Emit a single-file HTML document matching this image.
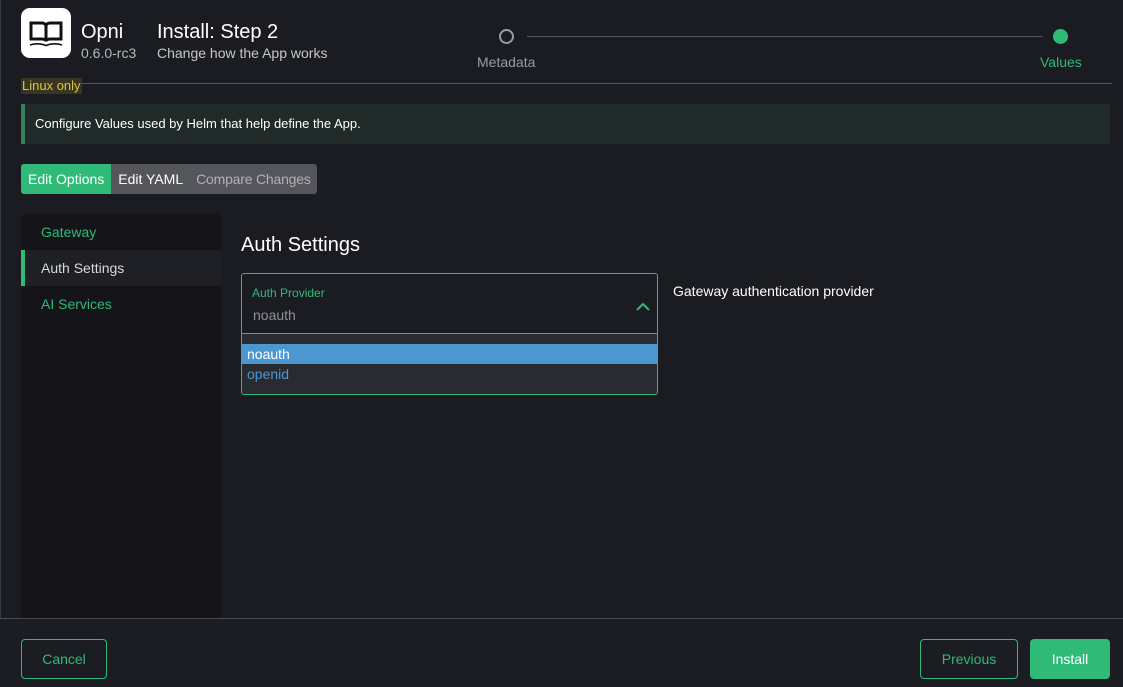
<!DOCTYPE html>
<html><head><style>
*{margin:0;padding:0;box-sizing:border-box}
body{width:1123px;height:687px;background:#1b1c21;font-family:"Liberation Sans",sans-serif;color:#fff;position:relative;overflow:hidden}
.abs{position:absolute}
</style></head><body>
<div class="abs" style="left:0;top:0;width:1px;height:687px;background:#3a3b40"></div>
<div class="abs" style="left:21px;top:8px;width:50px;height:50px;background:#fff;border-radius:9px">
<svg width="50" height="50" viewBox="0 0 50 50"><path d="M10 15h11c2.5 0 4 1.5 4 3.5v15c0-1.5-1.5-2.5-4-2.5H10z M40 15H29c-2.5 0-4 1.5-4 3.5v15c0-1.5 1.5-2.5 4-2.5h11z" fill="none" stroke="#111" stroke-width="3"/><path d="M9 37c5-1.5 11-1.5 16 0.5 5-2 11-2 16-0.5" fill="none" stroke="#111" stroke-width="1.6"/></svg></div>
<div class="abs" style="left:81px;top:21px;font-size:20px">Opni</div>
<div class="abs" style="left:81px;top:45px;font-size:14px;color:#b5b7bd">0.6.0-rc3</div>
<div class="abs" style="left:157px;top:21px;font-size:20px">Install: Step 2</div>
<div class="abs" style="left:157px;top:45px;font-size:14px;color:#c5c7cc">Change how the App works</div>
<div class="abs" style="left:499px;top:29px;width:15px;height:15px;border:2px solid #9a9ca3;border-radius:50%"></div>
<div class="abs" style="left:527px;top:36px;width:516px;height:1px;background:#55575d"></div>
<div class="abs" style="left:1053px;top:29px;width:15px;height:15px;background:#30ba78;border-radius:50%"></div>
<div class="abs" style="left:477px;top:54px;font-size:14px;color:#9a9ca3">Metadata</div>
<div class="abs" style="left:1040px;top:54px;font-size:14px;color:#30ba78">Values</div>
<div class="abs" style="left:21px;top:83px;width:1091px;height:1px;background:#55575d"></div>
<div class="abs" style="left:21px;top:78px;height:16px;padding:0 1px;background:#3a3520;font-size:13px;color:#d7c842;line-height:16px">Linux only</div>
<div class="abs" style="left:21px;top:104px;width:1089px;height:40px;background:#202a29;border-left:4px solid #37805e;font-size:13px;line-height:40px;padding-left:10px">Configure Values used by Helm that help define the App.</div>
<div class="abs" style="left:21px;top:164px;height:30px;width:296px;background:#55565c;border-radius:3px;font-size:14px;line-height:30px;display:flex;white-space:nowrap">
<span style="background:#30ba78;padding:0 7px;border-radius:3px 0 0 3px">Edit Options</span><span style="padding:0 7px">Edit YAML</span><span style="padding:0 0 0 6px;color:#b0b1b6;letter-spacing:-0.2px">Compare Changes</span></div>
<div class="abs" style="left:21px;top:214px;width:200px;height:404px;background:#141419;border-radius:5px 5px 0 0;font-size:14px">
<div style="height:36px;line-height:36px;padding-left:20px;color:#30ba78">Gateway</div>
<div style="height:36px;line-height:36px;padding-left:16px;color:#d8d9dc;background:#1f2025;border-left:4px solid #30ba78">Auth Settings</div>
<div style="height:36px;line-height:36px;padding-left:20px;color:#30ba78">AI Services</div>
</div>
<div class="abs" style="left:241px;top:234px;font-size:20px">Auth Settings</div>
<div class="abs" style="left:241px;top:273px;width:417px;height:122px;border:1px solid #30ba78;border-radius:3px;background:#2a2b31;overflow:hidden">
<div style="height:60px;background:#1b1c21;border-bottom:1px solid #30ba78;position:relative">
<div class="abs" style="left:10px;top:12px;font-size:12px;color:#30ba78">Auth Provider</div>
<div class="abs" style="left:11px;top:33px;font-size:14px;color:#8e9096">noauth</div>
<svg class="abs" style="left:394px;top:28px" width="14" height="10"><path d="M1 8l6-6 6 6" fill="none" stroke="#30ba78" stroke-width="2"/></svg>
</div>
<div style="margin-top:10px;height:20px;background:#4b97d1;font-size:14px;line-height:20px;padding-left:5px">noauth</div>
<div style="height:20px;font-size:14px;line-height:20px;padding-left:5px;color:#4b97d1">openid</div>
</div>
<div class="abs" style="left:673px;top:283px;font-size:14px">Gateway authentication provider</div>
<div class="abs" style="left:0;top:618px;width:1123px;height:69px;background:#1c1d22;border-top:1px solid #4a4b50"></div>
<div class="abs" style="left:21px;top:639px;width:86px;height:40px;border:1px solid #30ba78;border-radius:4px;color:#30ba78;font-size:14px;text-align:center;line-height:38px">Cancel</div>
<div class="abs" style="left:920px;top:639px;width:98px;height:40px;border:1px solid #30ba78;border-radius:4px;color:#30ba78;font-size:14px;text-align:center;line-height:38px">Previous</div>
<div class="abs" style="left:1030px;top:639px;width:80px;height:40px;background:#30ba78;border-radius:4px;font-size:14px;text-align:center;line-height:40px">Install</div>
</body></html>
